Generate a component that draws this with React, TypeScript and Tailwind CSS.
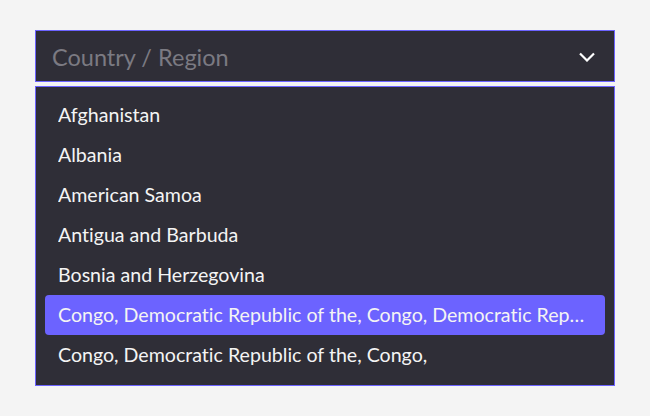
import React from 'react';

const countries = [
  'Afghanistan',
  'Albania',
  'American Samoa',
  'Antigua and Barbuda',
  'Bosnia and Herzegovina',
  'Congo, Democratic Republic of the, Congo, Democratic Republic of the',
  'Congo, Democratic Republic of the, Congo,',
];

export default function App() {
  const active = 5;
  return (
    <div className="min-h-[416px] w-full bg-[#f4f4f4] px-[35px] pt-[30px] font-['Lato',sans-serif] [font-variant-ligatures:none]">
      <div className="w-[580px]">
        <button className="flex h-[52px] w-full items-center justify-between border border-[#6c63ff] bg-[#2f2e37] pl-[16px] pr-[19px] text-left">
          <span className="mt-[3px] text-[23.5px] leading-none text-[#7b7a82]">Country / Region</span>
          <svg width="16" height="10" viewBox="0 0 16 10" fill="none" className="mt-[2px]">
            <path d="M1 1.5 8 8.5l7-7" stroke="#ffffff" strokeWidth="2.2" />
          </svg>
        </button>
        <ul className="mt-[4px] flex flex-col border border-[#6c63ff] bg-[#2f2e37] px-[9px] pt-[8px] pb-[10px]">
          {countries.map((c, i) => (
            <li
              key={i}
              className={`flex h-[40px] items-center rounded-[4px] px-[13px] text-[19.6px] text-[#f4f4f4] ${
                i === active ? 'bg-[#6c63ff]' : ''
              }`}
            >
              <span className="-mt-[1px] truncate">{c}</span>
            </li>
          ))}
        </ul>
      </div>
    </div>
  );
}
